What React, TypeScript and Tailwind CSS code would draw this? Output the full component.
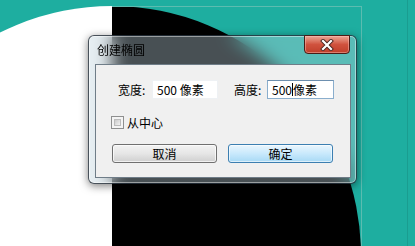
import React from "react";

const font = { fontFamily: '"Noto Sans CJK SC", "Noto Sans", sans-serif' };

function Background() {
  return (
    <svg className="absolute inset-0" width={415} height={246} viewBox="0 0 415 246">
      <rect x={0} y={0} width={415} height={246} fill="#1eaea0" />
      <defs>
        <clipPath id="circ">
          <circle cx={112} cy={255} r={249} />
        </clipPath>
        <clipPath id="canvas">
          <rect x={-10} y={6} width={371} height={250} />
        </clipPath>
      </defs>
      <g clipPath="url(#canvas)">
        <g clipPath="url(#circ)">
          <rect x={-10} y={0} width={122} height={260} fill="#ffffff" />
          <rect x={112} y={0} width={260} height={260} fill="#000000" />
        </g>
      </g>
      <line x1={112} y1={6.5} x2={361.5} y2={6.5} stroke="#5cbcb0" strokeWidth={1} />
      <line x1={361.5} y1={6} x2={361.5} y2={246} stroke="#5cbcb0" strokeWidth={1} />
      <line x1={407.5} y1={0} x2={407.5} y2={246} stroke="#1a9d90" strokeWidth={1} />
    </svg>
  );
}

function CloseButton() {
  return (
    <div className="-mt-px mr-[6px] w-[46px] h-[19px] rounded-b-[4px] border border-[#4a1c16] bg-gradient-to-b from-[#eaa595] via-[#d0523e] to-[#bf3f2a] flex items-center justify-center shadow-[inset_0_0_0_1px_rgba(255,200,190,0.45)]">
      <svg width={16} height={12} viewBox="0 0 16 12">
        <path d="M4 2 L12 10 M12 2 L4 10" stroke="#4a2420" strokeWidth={4} strokeLinecap="square" />
        <path d="M4 2 L12 10 M12 2 L4 10" stroke="#ffffff" strokeWidth={2.2} strokeLinecap="square" />
      </svg>
    </div>
  );
}

export default function App() {
  return (
    <div className="relative w-[415px] h-[246px] overflow-hidden" style={font}>
      <Background />
      <div className="absolute left-[88px] top-[35px] w-[269px] h-[149px] rounded-[6px] border border-[rgba(20,30,40,0.75)] bg-[rgba(190,210,222,0.38)] backdrop-blur-[9px] shadow-[0_2px_8px_rgba(0,0,0,0.5),inset_0_0_0_1px_rgba(255,255,255,0.45)] flex flex-col">
        <div className="h-[28px] flex justify-between items-start">
          <div className="pl-[8px] pt-[6px] text-[12px] leading-[16px] text-[#000]">创建椭圆</div>
          <CloseButton />
        </div>
        <div className="ml-[6px] w-[256px] h-[114px] border border-[#6f7d88] bg-[#f0f0f0] flex flex-col text-[12px] text-[#000]">
          <div className="mt-[15px] ml-[22px] flex items-center h-[19px]">
            <div className="w-[34px] leading-[16px]">宽度:</div>
            <div className="w-[66px] h-[19px] bg-white border border-[#eef1f4] flex items-center pl-[4px] leading-[16px]">
              500 像素
            </div>
            <div className="ml-[16px] w-[33px] leading-[16px]">高度:</div>
            <div className="w-[67px] h-[19px] bg-white border border-[#8aaecd] border-t-[#6d8faf] flex items-center pl-[4px] leading-[16px]">
              <span>500</span>
              <span className="w-px h-[13px] bg-black" />
              <span>像素</span>
            </div>
          </div>
          <div className="mt-[17px] ml-[15px] h-[13px] flex items-center">
            <div className="w-[13px] h-[13px] border border-[#8e8f8f] bg-[#f4f4f4] p-[2px]">
              <div className="w-full h-full bg-gradient-to-br from-[#cbcbcb] to-[#f2f2f2] border border-[#bcbcbc]" />
            </div>
            <div className="ml-[3px] leading-[14px]">从中心</div>
          </div>
          <div className="mt-[15px] ml-[16px] flex gap-[11px]">
            <div className="w-[105px] h-[19px] rounded-[3px] border border-[#707070] bg-gradient-to-b from-[#f3f3f3] via-[#e6e6e6] to-[#cfcfcf] shadow-[inset_0_0_0_1px_rgba(255,255,255,0.7)] flex items-center justify-center leading-[16px]">
              取消
            </div>
            <div className="w-[105px] h-[19px] rounded-[3px] border border-[#3c7fb1] bg-gradient-to-b from-[#eaf6fd] via-[#c9e9fc] to-[#a7d9f5] shadow-[inset_0_0_0_1px_rgba(255,255,255,0.6)] flex items-center justify-center leading-[16px]">
              确定
            </div>
          </div>
        </div>
      </div>
    </div>
  );
}
